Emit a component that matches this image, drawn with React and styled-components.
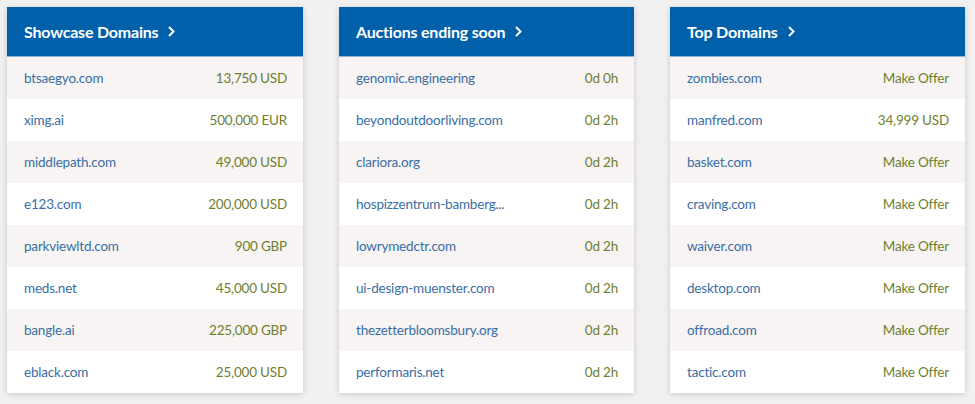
import styled, { createGlobalStyle } from "styled-components";

const GlobalStyle = createGlobalStyle`
  body {
    margin: 0;
    background: #f1f1f1;
    font-family: Lato, "Open Sans", sans-serif;
  }
`;

const showcase = [
  ["btsaegyo.com", "13,750 USD"],
  ["ximg.ai", "500,000 EUR"],
  ["middlepath.com", "49,000 USD"],
  ["e123.com", "200,000 USD"],
  ["parkviewltd.com", "900 GBP"],
  ["meds.net", "45,000 USD"],
  ["bangle.ai", "225,000 GBP"],
  ["eblack.com", "25,000 USD"],
];

const auctions = [
  ["genomic.engineering", "0d 0h"],
  ["beyondoutdoorliving.com", "0d 2h"],
  ["clariora.org", "0d 2h"],
  ["hospizzentrum-bamberg...", "0d 2h"],
  ["lowrymedctr.com", "0d 2h"],
  ["ui-design-muenster.com", "0d 2h"],
  ["thezetterbloomsbury.org", "0d 2h"],
  ["performaris.net", "0d 2h"],
];

const topDomains = [
  ["zombies.com", "Make Offer"],
  ["manfred.com", "34,999 USD"],
  ["basket.com", "Make Offer"],
  ["craving.com", "Make Offer"],
  ["waiver.com", "Make Offer"],
  ["desktop.com", "Make Offer"],
  ["offroad.com", "Make Offer"],
  ["tactic.com", "Make Offer"],
];

const Chevron = () => (
  <svg width="9" height="13" viewBox="0 0 9 13">
    <path d="M2 2l4.5 4.5L2 11" fill="none" stroke="#fff" strokeWidth="2" />
  </svg>
);

const DomainCard = ({ title, rows }) => (
  <Card>
    <CardHeader>
      <span>{title}</span>
      <Chevron />
    </CardHeader>
    {rows.map(([name, value], i) => (
      <Row key={i} $alt={i % 2 === 0}>
        <DomainName>{name}</DomainName>
        <Value>{value}</Value>
      </Row>
    ))}
  </Card>
);

export default function App() {
  return (
    <>
      <GlobalStyle />
      <Wrapper>
        <DomainCard title="Showcase Domains" rows={showcase} />
        <DomainCard title="Auctions ending soon" rows={auctions} />
        <DomainCard title="Top Domains" rows={topDomains} />
      </Wrapper>
    </>
  );
}

const Wrapper = styled.div`
  display: grid;
  grid-template-columns: 296px 295px 295px;
  column-gap: 36px;
  padding: 7px 10px 11px 7px;
`;

const Card = styled.div`
  background: #ffffff;
  box-shadow: 0 1px 6px rgba(0, 0, 0, 0.18);
`;

const CardHeader = styled.div`
  height: 49px;
  background: #0060aa;
  border-bottom: 1px solid #8fb5d8;
  display: flex;
  align-items: center;
  gap: 9px;
  padding: 0 17px;
  color: #ffffff;
  font-size: 16px;
  font-weight: 700;
  letter-spacing: -0.2px;
`;

const Row = styled.div`
  height: 42px;
  display: flex;
  align-items: center;
  justify-content: space-between;
  padding: 0 16px 0 17px;
  background: ${(p) => (p.$alt ? "#f7f4f3" : "#ffffff")};
  font-size: 13.5px;
  letter-spacing: -0.2px;
`;

const DomainName = styled.span`
  color: #3a6ea5;
  max-width: 170px;
  overflow: hidden;
  white-space: nowrap;
  text-overflow: ellipsis;
`;

const Value = styled.span`
  color: #6e7f2e;
`;
